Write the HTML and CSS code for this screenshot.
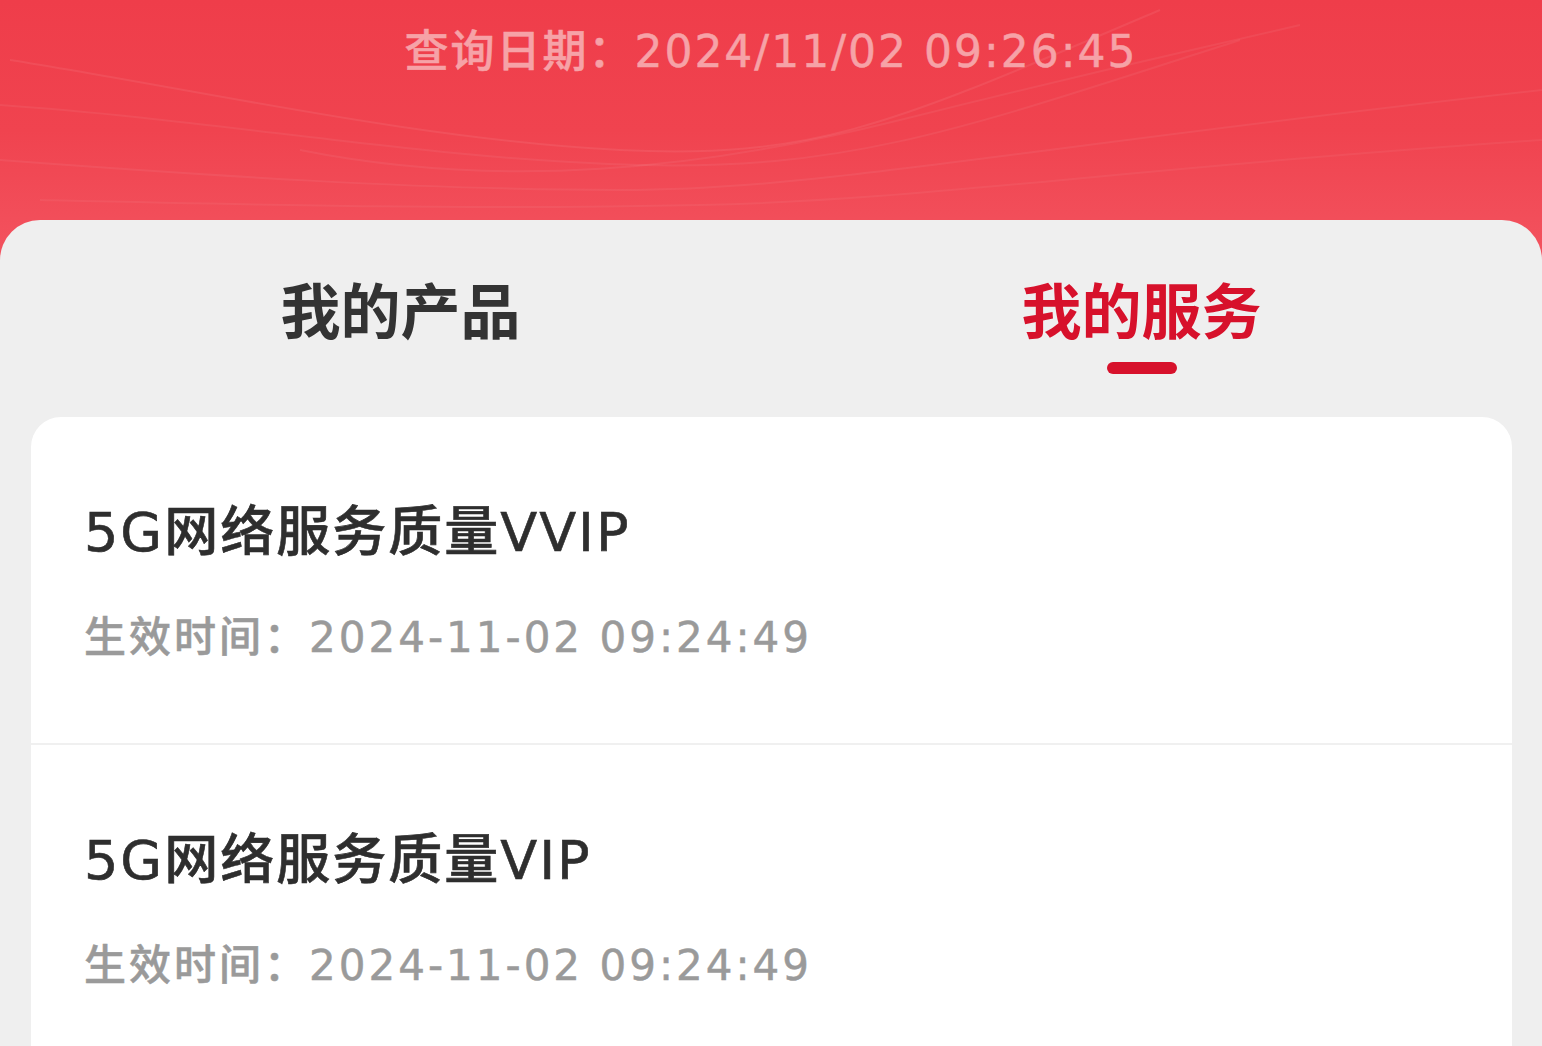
FILE: index.html
```html
<!DOCTYPE html>
<html lang="zh-CN">
<head>
    <meta charset="UTF-8">
    <meta name="viewport" content="width=device-width, initial-scale=1.0">
    <title>我的服务</title>
    <link rel="stylesheet" href="styles.css">
</head>
<body>
    <header class="banner">
        <!-- light streaks across the red banner -->
        <svg class="banner-lines" width="1542" height="260" viewBox="0 0 1542 260" preserveAspectRatio="none">
            <g fill="none" stroke="#ffffff" stroke-width="2">
                <path d="M10 60 C 200 90, 420 140, 620 150 S 900 120, 1160 10" stroke-opacity="0.07"/>
                <path d="M0 105 C 220 120, 430 160, 640 165 S 960 130, 1240 40" stroke-opacity="0.06"/>
                <path d="M0 160 C 200 175, 420 190, 620 190 S 1000 150, 1542 90" stroke-opacity="0.06"/>
                <path d="M40 200 C 260 205, 470 210, 700 205 S 1100 170, 1542 140" stroke-opacity="0.05"/>
                <path d="M300 150 C 500 190, 700 170, 900 120 S 1150 60, 1300 25" stroke-opacity="0.06"/>
            </g>
        </svg>
        <p class="query-date">查询日期：2024/11/02 09:26:45</p>
    </header>
    <main class="panel">
        <nav class="tabs">
            <div class="tab">
                <span class="tab-label">我的产品</span>
            </div>
            <div class="tab active">
                <span class="tab-label">我的服务</span>
                <span class="tab-bar"></span>
            </div>
        </nav>
        <section class="service-list">
            <div class="service-item">
                <h3 class="service-name">5G网络服务质量VVIP</h3>
                <p class="service-time">生效时间：2024-11-02 09:24:49</p>
            </div>
            <div class="service-item">
                <h3 class="service-name">5G网络服务质量VIP</h3>
                <p class="service-time">生效时间：2024-11-02 09:24:49</p>
            </div>
        </section>
    </main>
</body>
</html>
```

FILE: styles.css
```css
* {
    box-sizing: border-box;
}

body {
    margin: 0;
    height: 1046px;
    overflow: hidden;
    background-color: #efefef;
    font-family: "Noto Sans CJK SC", "Noto Sans", sans-serif;
}

/* red banner on top */
.banner {
    position: relative;
    height: 260px;
    background: linear-gradient(180deg, #ef3d4a 0%, #f0434f 50%, #f3535f 100%);
    overflow: hidden;
}

.banner-lines {
    position: absolute;
    top: 0;
    left: 0;
}

.query-date {
    position: relative;
    margin: 0;
    padding-top: 26px;
    line-height: 52px;
    font-family: "DejaVu Sans", "Noto Sans CJK SC", sans-serif;
    font-size: 44px;
    font-weight: 500;
    letter-spacing: 2px;
    text-align: center;
    color: #f6a2a7;
    -webkit-text-stroke: 0.5px #f6a2a7;
}

/* grey panel with tabs */
.panel {
    position: relative;
    margin-top: -40px;
    background-color: #efefef;
    border-radius: 40px 40px 0 0;
    min-height: 826px;
}

.tabs {
    display: grid;
    grid-template-columns: 1fr 1fr;
    padding: 56px 30px 0;
    height: 197px;
}

.tab {
    display: flex;
    flex-direction: column;
    align-items: center;
}

.tab-label {
    font-size: 60px;
    line-height: 64px;
    font-weight: 700;
    color: #333333;
}

.tab.active .tab-label {
    color: #d7112b;
}

.tab-bar {
    display: block;
    width: 70px;
    height: 12px;
    margin-top: 22px;
    border-radius: 6px;
    background-color: #d7112b;
}

/* white service card */
.service-list {
    margin: 0 30px 0 31px;
    background-color: #ffffff;
    border-radius: 30px 30px 0 0;
    min-height: 640px;
}

.service-item {
    padding: 85px 53px 80px;
    border-bottom: 2px solid #f0f0f0;
}

.service-name {
    margin: 0;
    font-family: "DejaVu Sans", "Noto Sans CJK SC", sans-serif;
    font-size: 54px;
    line-height: 62px;
    font-weight: 500;
    letter-spacing: 2px;
    color: #2e2e2e;
    -webkit-text-stroke: 0.6px #2e2e2e;
}

.service-time {
    margin: 49px 0 0;
    font-family: "DejaVu Sans", "Noto Sans CJK SC", sans-serif;
    font-size: 42px;
    line-height: 50px;
    font-weight: 500;
    letter-spacing: 3px;
    color: #9a9a9a;
    -webkit-text-stroke: 0.5px #9a9a9a;
}
```
